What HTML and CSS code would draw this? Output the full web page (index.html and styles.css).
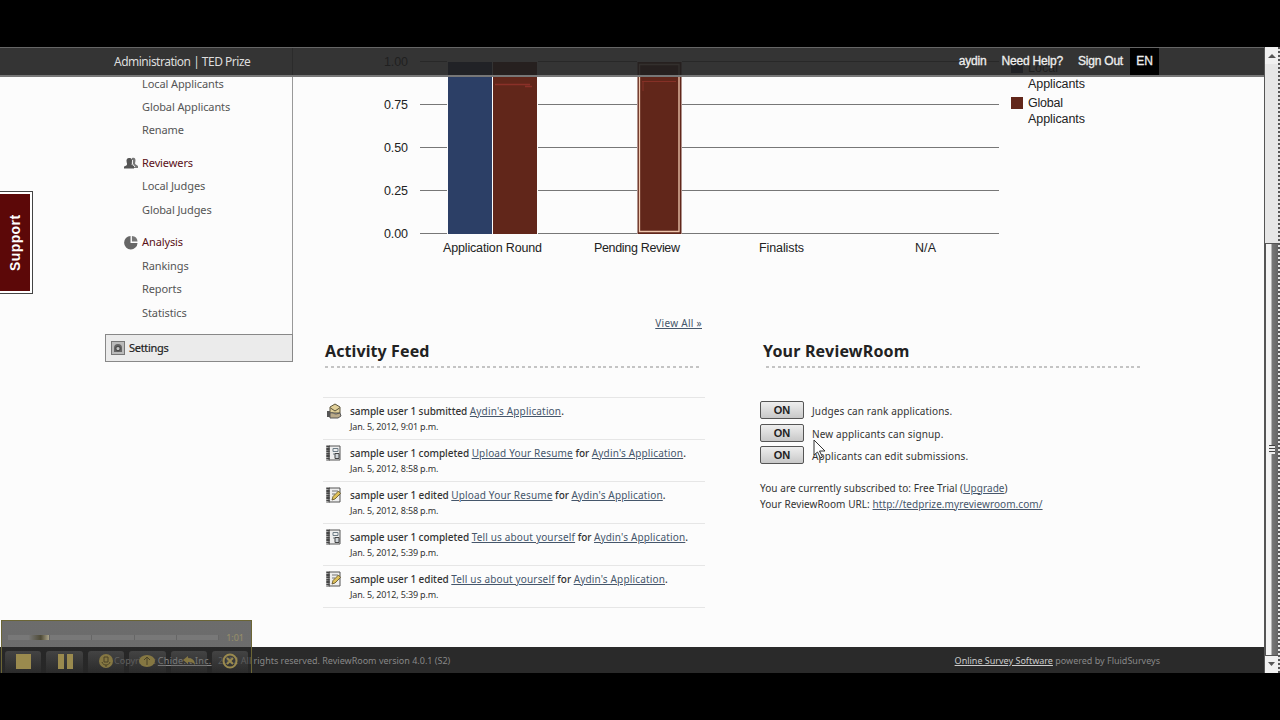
FILE: index.html
```html
<!DOCTYPE html>
<html lang="en">
<head>
    <meta charset="UTF-8">
    <title>Administration | TED Prize</title>
    <link rel="stylesheet" href="styles.css">
</head>
<body>
    <div class="window">
        <div class="page">
            <header>
                <h1>Administration | TED Prize</h1>
                <ul>
                    <li>aydin</li>
                    <li>Need Help?</li>
                    <li class="signout">Sign Out</li>
                    <li class="lang">EN</li>
                </ul>
            </header>

            <main>
                <nav>
                    <div class="menu">
                        <ul>
                            <li>Local Applicants</li>
                            <li>Global Applicants</li>
                            <li>Rename</li>
                        </ul>
                        <h4>
                            <svg width="14" height="12" viewBox="0 0 14 12"><path d="M8 1c3-1 4 1 3.300 4-.6 2-.2 2 2.700 4v2h-4L7 7z" fill="#777"/><path d="M5 1c3 0 3.500 2 2.700 4.500C7 7.500 7 8 10 9v2.500H0V9.500C3 8.500 3.500 8 2.700 5.500 2 2.500 3 1 5 1z" fill="#555"/><path d="M8.500 3v4l2.500 3" stroke="#eee" fill="none"/></svg>
                            Reviewers
                        </h4>
                        <ul>
                            <li>Local Judges</li>
                            <li>Global Judges</li>
                        </ul>
                        <h4>
                            <svg width="15" height="15" viewBox="0 0 15 15"><path d="M7 .5v7.500h7.500A7.200 7.200 0 1 1 7 .5z" fill="#666"/><path d="M8.500 .5A6.500 6.500 0 0 1 14.500 6.500h-6z" fill="#777"/></svg>
                            Analysis
                        </h4>
                        <ul>
                            <li>Rankings</li>
                            <li>Reports</li>
                            <li>Statistics</li>
                        </ul>
                    </div>
                    <div class="settings">
                        <svg width="14" height="14" viewBox="0 0 14 14"><rect x=".5" y=".5" width="13" height="13" fill="#bbb" stroke="#777"/><path d="M3 7a4 4 0 0 1 8 0v4H3z" fill="#666"/><circle cx="7" cy="7.500" r="2.300" fill="#999" stroke="#444"/><path d="M7 6.500v2.500" stroke="#eee"/></svg>
                        <span>Settings</span>
                    </div>
                </nav>

                <section class="content">
                    <svg class="chart" width="800" height="242" viewBox="316 47 800 242">
                        <g stroke="#777" stroke-width="1">
                            <path d="M420 61.500H999M420 104.500H999M420 147.500H999M420 190.500H999M420 233.500H999"/>
                        </g>
                        <rect x="447" y="60" width="91" height="174" fill="#fcfcfc"/>
                        <rect x="448" y="62" width="44" height="172" fill="#2c3f66"/>
                        <rect x="493" y="62" width="44" height="172" fill="#61261a"/>
                        <path d="M495 84.500h35M525 86.500h7" stroke="#8a3028" stroke-width="1.500"/>
                        <rect x="637" y="60" width="45" height="174" fill="#fcfcfc"/>
                        <rect x="637.500" y="62" width="44" height="172" fill="#61261a"/>
                        <path d="M639.500 64.500V231.500H679V64.500z" stroke="#efc7ae" fill="none" stroke-width="1.300"/>
                        <path d="M642 81.500h34M643 82v9" stroke="#853026"/>
                        <g class="axis">
                            <text x="384" y="66" textLength="24">1.00</text>
                            <text x="384" y="109" textLength="24">0.75</text>
                            <text x="384" y="152" textLength="24">0.50</text>
                            <text x="384" y="195" textLength="24">0.25</text>
                            <text x="384" y="238" textLength="24">0.00</text>
                            <text x="443" y="252" textLength="99">Application Round</text>
                            <text x="594" y="252" textLength="86">Pending Review</text>
                            <text x="759" y="252" textLength="45">Finalists</text>
                            <text x="915" y="252" textLength="21">N/A</text>
                            <text x="1028" y="72" textLength="30">Local</text>
                            <text x="1028" y="87.500" textLength="57">Applicants</text>
                            <text x="1028" y="107" textLength="35">Global</text>
                            <text x="1028" y="123" textLength="57">Applicants</text>
                        </g>
                        <rect x="1011" y="61" width="12" height="12" fill="#2c3f66"/>
                        <rect x="1011" y="97" width="12" height="12" fill="#61261a"/>
                    </svg>

                    <div class="columns">
                        <div class="feed">
                            <div class="view-all"><a>View All »</a></div>
                            <h2>Activity Feed</h2>
                            <ul>
                                <li>
                                    <svg width="16" height="16" viewBox="0 0 16 16"><path d="M4 4l5-3 5 3v6H4z" fill="#e0cf98" stroke="#5c553c"/><path d="M4.500 5l4.500 3 4.500-3" stroke="#5c553c" fill="none"/><path d="M1 8h3v6H1z" fill="#555"/><path d="M4 10c3-1 4 1 6 1l4-1 1 3-3 2H4z" fill="#b9a988" stroke="#555"/></svg>
                                    <div>
                                        <p>sample user 1 submitted <a>Aydin's Application</a>.</p>
                                        <small>Jan. 5, 2012, 9:01 p.m.</small>
                                    </div>
                                </li>
                                <li>
                                    <svg width="16" height="16" viewBox="0 0 16 16"><path d="M3 1h11v14H3z" fill="#eee" stroke="#555"/><path d="M2 .5v15" stroke="#444" stroke-width="3.500" stroke-dasharray="2 .4"/><path d="M7 3.500h5v3H7zM7 9h3" stroke="#6d7c86" fill="none"/><path d="M9 8.500h4v5H9z" fill="#cdd3d8" stroke="#444"/></svg>
                                    <div>
                                        <p>sample user 1 completed <a>Upload Your Resume</a> for <a>Aydin's Application</a>.</p>
                                        <small>Jan. 5, 2012, 8:58 p.m.</small>
                                    </div>
                                </li>
                                <li>
                                    <svg width="16" height="16" viewBox="0 0 16 16"><path d="M3 1h11v14H3z" fill="#eee" stroke="#555"/><path d="M2 .5v15" stroke="#444" stroke-width="3.500" stroke-dasharray="2 .4"/><path d="M6 4h6M6 7h3" stroke="#777"/><path d="M6 13l1-3.500L12.500 4l2 2.500L9 12z" fill="#dfc15a" stroke="#594b22" stroke-width=".8"/></svg>
                                    <div>
                                        <p>sample user 1 edited <a>Upload Your Resume</a> for <a>Aydin's Application</a>.</p>
                                        <small>Jan. 5, 2012, 8:58 p.m.</small>
                                    </div>
                                </li>
                                <li>
                                    <svg width="16" height="16" viewBox="0 0 16 16"><path d="M3 1h11v14H3z" fill="#eee" stroke="#555"/><path d="M2 .5v15" stroke="#444" stroke-width="3.500" stroke-dasharray="2 .4"/><path d="M7 3.500h5v3H7zM7 9h3" stroke="#6d7c86" fill="none"/><path d="M9 8.500h4v5H9z" fill="#cdd3d8" stroke="#444"/></svg>
                                    <div>
                                        <p>sample user 1 completed <a>Tell us about yourself</a> for <a>Aydin's Application</a>.</p>
                                        <small>Jan. 5, 2012, 5:39 p.m.</small>
                                    </div>
                                </li>
                                <li>
                                    <svg width="16" height="16" viewBox="0 0 16 16"><path d="M3 1h11v14H3z" fill="#eee" stroke="#555"/><path d="M2 .5v15" stroke="#444" stroke-width="3.500" stroke-dasharray="2 .4"/><path d="M6 4h6M6 7h3" stroke="#777"/><path d="M6 13l1-3.500L12.500 4l2 2.500L9 12z" fill="#dfc15a" stroke="#594b22" stroke-width=".8"/></svg>
                                    <div>
                                        <p>sample user 1 edited <a>Tell us about yourself</a> for <a>Aydin's Application</a>.</p>
                                        <small>Jan. 5, 2012, 5:39 p.m.</small>
                                    </div>
                                </li>
                            </ul>
                        </div>

                        <div class="room">
                            <h2>Your ReviewRoom</h2>
                            <ul>
                                <li><button>ON</button>Judges can rank applications.</li>
                                <li><button>ON</button>New applicants can signup.</li>
                                <li><button>ON</button>Applicants can edit submissions.</li>
                            </ul>
                            <p>You are currently subscribed to: Free Trial (<a>Upgrade</a>)</p>
                            <p>Your ReviewRoom URL: <a>http://tedprize.myreviewroom.com/</a></p>
                        </div>
                    </div>
                </section>
            </main>

            <footer>
                <p class="copyright">Copyright <a>Chide.it Inc.</a> 2012 All rights reserved. ReviewRoom version 4.0.1 (S2)</p>
                <p><a>Online Survey Software</a> powered by FluidSurveys</p>
            </footer>

            <div class="support"><span>Support</span></div>

            <!-- mouse pointer -->
            <svg class="cursor" width="13" height="21" viewBox="0 0 13 21"><path d="M1 1v15l3.500-3 3 6 2-1-3-6H12z" fill="#fff" stroke="#333"/></svg>

            <!-- screen recorder controls -->
            <div class="recorder">
                <div class="track">
                    <div class="bar"><i></i><i></i><i></i><i></i><i></i></div>
                    <span>1:01</span>
                </div>
                <div class="buttons">
                    <span><svg width="20" height="20"><path d="M3 3h15v15H3z" fill="#9a8a4e"/></svg></span>
                    <span><svg width="20" height="20"><path d="M3 3h6v15H3zM12 3h6v15h-6z" fill="#9a8a4e"/></svg></span>
                    <span><svg width="20" height="20"><circle cx="10" cy="10" r="7" fill="#857742"/><path d="M8 6h4v5H8zM6 11c1 4 7 4 8 0M10 14v2" stroke="#4a4327" fill="none"/></svg></span>
                    <span><svg width="20" height="20"><ellipse cx="10" cy="10" rx="8" ry="6" fill="#857742"/><path d="M10 6v8M7 9l3-3 3 3" stroke="#4a4327" fill="none"/></svg></span>
                    <span><svg width="20" height="20"><path d="M4 9l5-4v2c5 0 7 3 7 7-2-3-4-3-7-3v2z" fill="#857742"/></svg></span>
                    <span><svg width="20" height="20"><circle cx="10" cy="10" r="6.500" fill="none" stroke="#9a8a4e" stroke-width="2"/><path d="M7 7l6 6M13 7l-6 6" stroke="#9a8a4e" stroke-width="2"/></svg></span>
                </div>
            </div>
        </div>

        <div class="scrollbar">
            <div class="arrow"><svg width="8" height="5"><path d="M0 5l4-4 4 4z" fill="#555"/></svg></div>
            <div class="rail"></div>
            <div class="thumb"><b></b></div>
            <div class="arrow"><svg width="8" height="5"><path d="M0 0h7L3.500 4z" fill="#555"/></svg></div>
        </div>
    </div>
</body>
</html>
```
FILE: styles.css
```css
* {
    box-sizing: border-box;
}

body {
    margin: 0;
    padding: 47px 0;
    height: 720px;
    overflow: hidden;
    background: #000;
    color: #333;
    font-family: "Noto Sans", "Open Sans", sans-serif;
    font-size: 10px;
}

ul, h1, h2, h4, p {
    margin: 0;
    padding: 0;
    list-style: none;
    white-space: nowrap;
}

svg {
    display: block;
    flex: none;
}

a {
    color: #45566b;
    text-decoration: underline;
}

.window {
    display: flex;
    height: 626px;
}

.page {
    position: relative;
    width: 1264px;
    height: 626px;
    background: #fcfcfc;
    overflow: hidden;
}

header {
    position: absolute;
    z-index: 2;
    top: 0;
    left: 0;
    width: 100%;
    height: 30px;
    display: flex;
    justify-content: space-between;
    padding: 0 105px 0 114px;
    background: rgba(32, 32, 32, 0.91);
    background-clip: padding-box;
    border-top: 1px solid #666;
    border-bottom: 2px solid #777;
    color: #eee;
}

header h1 {
    font-size: 12px;
    font-weight: normal;
    line-height: 27px;
    letter-spacing: -0.5px;
    color: #ddd;
}

header ul {
    display: flex;
    font: 12px/27px "Liberation Sans", Arial, sans-serif;
    letter-spacing: -0.2px;
    -webkit-text-stroke: 0.3px #eee;
}

header li {
    margin-right: 15px;
}

header .signout {
    margin-right: 7px;
}

header .lang {
    width: 29px;
    margin: 0;
    background: #000;
    text-align: center;
}

main {
    display: flex;
    height: 600px;
    padding-left: 105px;
}

nav {
    width: 188px;
    font-size: 11px;
    letter-spacing: -0.1px;
    color: #555;
}

.menu {
    height: 287px;
    padding: 24.5px 0 0 37px;
    border-right: 1px solid #999;
}

.menu li,
.menu h4 {
    height: 23.4px;
    line-height: 23.4px;
}

.menu h4 {
    display: flex;
    align-items: center;
    gap: 4px;
    margin: 9.3px 0 0 -18px;
    font-size: 11px;
    font-weight: normal;
    color: #5a1016;
}

.menu h4 svg {
    width: 14px;
}

.settings {
    display: flex;
    align-items: center;
    gap: 4px;
    height: 28px;
    padding-left: 5px;
    background: #ebebeb;
    border: 1px solid #888;
    color: #222;
}

.settings span {
    height: 17px;
    letter-spacing: -0.3px;
    -webkit-text-stroke: 0.2px #222;
}

.content {
    margin-left: 23px;
}

.chart {
    height: 242px;
}

.axis {
    font: 12.5px "Liberation Sans", Arial, sans-serif;
    fill: #222;
}

.columns {
    display: flex;
    padding: 26px 0 0 7px;
}

h2 {
    font-size: 16px;
    line-height: 20px;
    color: #222;
}

/* dashed rule under the headings */
h2::after {
    content: "";
    display: block;
    height: 2px;
    margin-top: 5px;
    background: repeating-linear-gradient(90deg, #c4c4c4 0 3px, transparent 3px 5.8px);
}

.feed {
    width: 382px;
}

.feed h2 {
    margin: 10px 3px 0 2px;
    letter-spacing: 0.1px;
}

.view-all {
    padding-right: 3px;
    height: 16px;
    line-height: 17px;
    text-align: right;
    letter-spacing: 0.3px;
}

.feed ul {
    margin-top: 29px;
    border-bottom: 1px solid #e6e6e6;
}

.feed li {
    display: flex;
    gap: 8px;
    height: 42.1px;
    padding: 4.5px 0 0 3px;
    border-top: 1px solid #e6e6e6;
}

.feed li p {
    height: 17px;
    line-height: 17px;
    font-weight: 500;
    letter-spacing: -0.05px;
}

.feed li a {
    font-weight: normal;
    letter-spacing: 0.16px;
}

.feed small {
    display: block;
    font-size: 9px;
    line-height: 14px;
    letter-spacing: -0.17px;
}

.room {
    margin-left: 55px;
    padding-top: 26px;
    width: 380px;
    letter-spacing: 0.07px;
}

.room h2 {
    margin-left: 3px;
    letter-spacing: 0.2px;
}

.room h2::after {
    margin-left: 3px;
}

.room ul {
    margin: 32px 0 12px;
}

.room li {
    display: flex;
    align-items: center;
    gap: 8px;
    height: 22.5px;
    letter-spacing: 0.13px;
}

.room button {
    width: 44px;
    height: 18px;
    margin-top: -2px;
    padding: 0;
    border: 1px solid #555;
    border-radius: 2px;
    background: linear-gradient(#eee, #c8c8c8);
    color: #222;
    font: bold 11px/16px "Liberation Sans", Arial, sans-serif;
}

.room p {
    line-height: 16px;
}

footer {
    display: flex;
    justify-content: space-between;
    height: 26px;
    padding: 0 104px 0 114px;
    background: #2a2a2a;
    color: #888;
    font-size: 9px;
    line-height: 27px;
}

footer a {
    color: #ccc;
}

.copyright a {
    margin-right: 4px;
    letter-spacing: 0.3px;
}

.support {
    position: absolute;
    top: 144px;
    left: 0;
    width: 33px;
    height: 103px;
    padding: 2px 2px 2px 0;
    border: 1px solid #444;
    border-left: 0;
    background: #fff;
}

.support span {
    display: block;
    width: 30px;
    height: 97px;
    background: #5c0808;
    color: #fff;
    font: bold 14px/30px "Liberation Sans", Arial, sans-serif;
    letter-spacing: 0.4px;
    text-align: center;
    writing-mode: vertical-rl;
    transform: rotate(180deg);
}

.cursor {
    position: absolute;
    top: 392px;
    left: 813px;
}

.recorder {
    position: absolute;
    left: 1px;
    bottom: 0;
    width: 251px;
    height: 53px;
    border: 1px solid #6b6535;
    border-bottom: 0;
    background: linear-gradient(rgba(60, 60, 60, 0.75) 26px, rgba(35, 35, 35, 0.4) 26px);
}

.track {
    display: flex;
    align-items: center;
    justify-content: space-between;
    height: 30px;
    padding: 2px 7px 0 6px;
    color: #99906a;
    font-size: 9px;
}

.bar {
    display: flex;
    width: 211px;
    height: 5px;
    background: #787878;
}

.bar i {
    width: 42.5px;
    border-right: 1px solid #666;
}

.bar i:first-child {
    background: linear-gradient(90deg, transparent 50%, #4e4a36 80%, #aaa38a);
}

.buttons {
    display: flex;
    gap: 5px;
    padding-left: 3px;
}

.buttons span {
    display: flex;
    justify-content: center;
    width: 36.4px;
    height: 22px;
    border-radius: 3px 3px 0 0;
    background: linear-gradient(rgba(110, 110, 110, 0.4), rgba(50, 50, 50, 0.3));
}

.scrollbar {
    width: 16px;
    display: flex;
    flex-direction: column;
    border-left: 1px solid #555;
    border-right: 2px dotted #555;
    background: #e6e6e6;
}

.arrow {
    display: flex;
    align-items: center;
    justify-content: center;
    height: 17px;
    background: #f0f0f0;
}

.rail {
    height: 179px;
}

.thumb {
    flex: 1;
    display: flex;
    align-items: center;
    border: 1px solid #555;
    border-right: 0;
    background: linear-gradient(90deg, #f4f4f4 5px, #777 6px, #666);
}

.thumb b {
    width: 6px;
    height: 9px;
    margin-left: 3px;
    background: repeating-linear-gradient(#444 0 1px, #eee 1px 3px);
}
```
